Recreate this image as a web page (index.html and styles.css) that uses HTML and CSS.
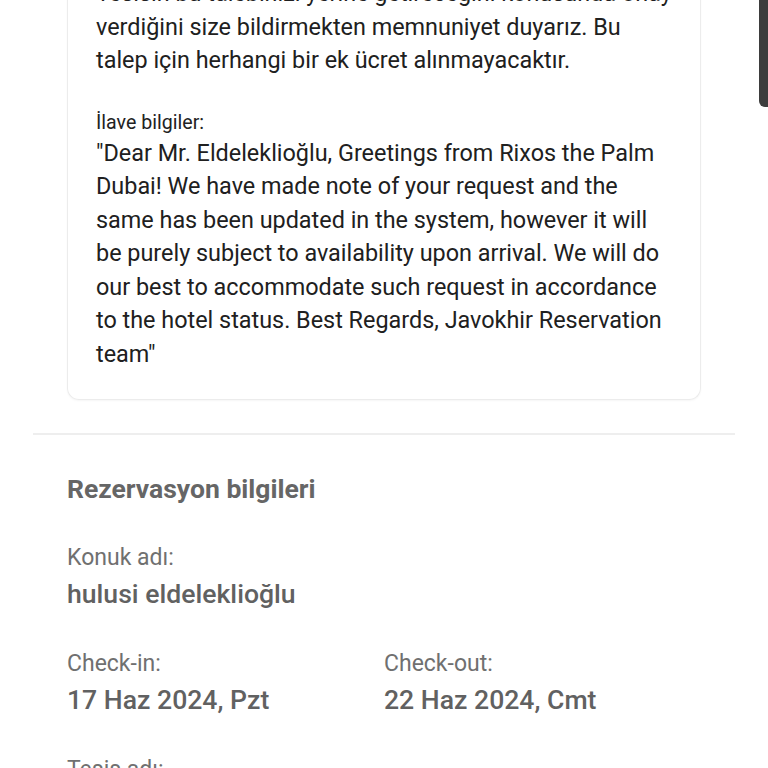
FILE: index.html
```html
<!DOCTYPE html>
<html>
<head>
	<meta charset="utf-8">
	<title>Rezervasyon</title>
	<link rel="stylesheet" href="styles.css">
</head>
<body>
	<div class="page">
		<div class="request-card">
			<p class="reply">
				Tesisin bu talebinizi yerine getireceğini konusunda onay verdiğini size bildirmekten memnuniyet duyarız. Bu talep için herhangi bir ek ücret alınmayacaktır.
			</p>
			<div class="extra-label">İlave bilgiler:</div>
			<p class="extra-text">
				"Dear Mr. Eldeleklioğlu, Greetings from Rixos the Palm Dubai! We have made note of your request and the same has been updated in the system, however it will be purely subject to availability upon arrival. We will do our best to accommodate such request in accordance to the hotel status. Best Regards, Javokhir Reservation team"
			</p>
		</div>

		<hr class="divider">

		<div class="booking">
			<h2>Rezervasyon bilgileri</h2>

			<div class="field">
				<div class="label">Konuk adı:</div>
				<div class="value">hulusi eldeleklioğlu</div>
			</div>

			<div class="field-row">
				<div class="field">
					<div class="label">Check-in:</div>
					<div class="value">17 Haz 2024, Pzt</div>
				</div>
				<div class="field">
					<div class="label">Check-out:</div>
					<div class="value">22 Haz 2024, Cmt</div>
				</div>
			</div>

			<div class="field">
				<div class="label">Tesis adı:</div>
				<div class="value">Rixos The Palm Hotel &amp; Suites</div>
			</div>
		</div>
	</div>

	<!-- scrollbar thumb of the app view -->
	<div class="scroll-thumb"></div>
</body>
</html>
```

FILE: styles.css
```css
/* Booking details screen, scrolled part way down */

html, body {
	margin: 0;
	height: 100%;
	overflow: hidden;
	background: #ffffff;
}

body {
	font-family: Roboto, "Noto Sans", sans-serif;
	color: #222222;
}

.page {
	margin-top: -51px;
	padding: 0 33px;
}

.request-card {
	margin: 0 34px;
	padding: 28px 28px 28px;
	border: 1px solid #ececec;
	border-top: none;
	border-radius: 0 0 12px 12px;
	box-shadow: 0 1px 2px rgba(0, 0, 0, 0.04);
}

.reply,
.extra-text {
	margin: 0;
	font-size: 23.4px;
	line-height: 33.5px;
	color: #202020;
}

.extra-label {
	margin-top: 31px;
	font-size: 19.6px;
	line-height: 28px;
	color: #222222;
}

.divider {
	margin: 33px 0 0;
	border: none;
	height: 2px;
	background: #eeeeee;
}

.booking {
	padding: 38px 34px 0;
}

.booking h2 {
	margin: 0 0 39px;
	font-size: 26.5px;
	line-height: 32px;
	font-weight: 700;
	color: #666666;
}

.field {
	margin-bottom: 40px;
}

.field-row {
	display: grid;
	grid-template-columns: 1fr 1fr;
}

.label {
	font-size: 23px;
	line-height: 28px;
	color: #707070;
	margin-bottom: 6px;
}

.value {
	font-size: 26.6px;
	line-height: 32px;
	font-weight: 500;
	color: #616161;
}

.scroll-thumb {
	position: absolute;
	top: 0;
	right: 0;
	width: 9px;
	height: 107px;
	background: #3d3d3d;
	border-radius: 0 0 0 6px;
}
```
